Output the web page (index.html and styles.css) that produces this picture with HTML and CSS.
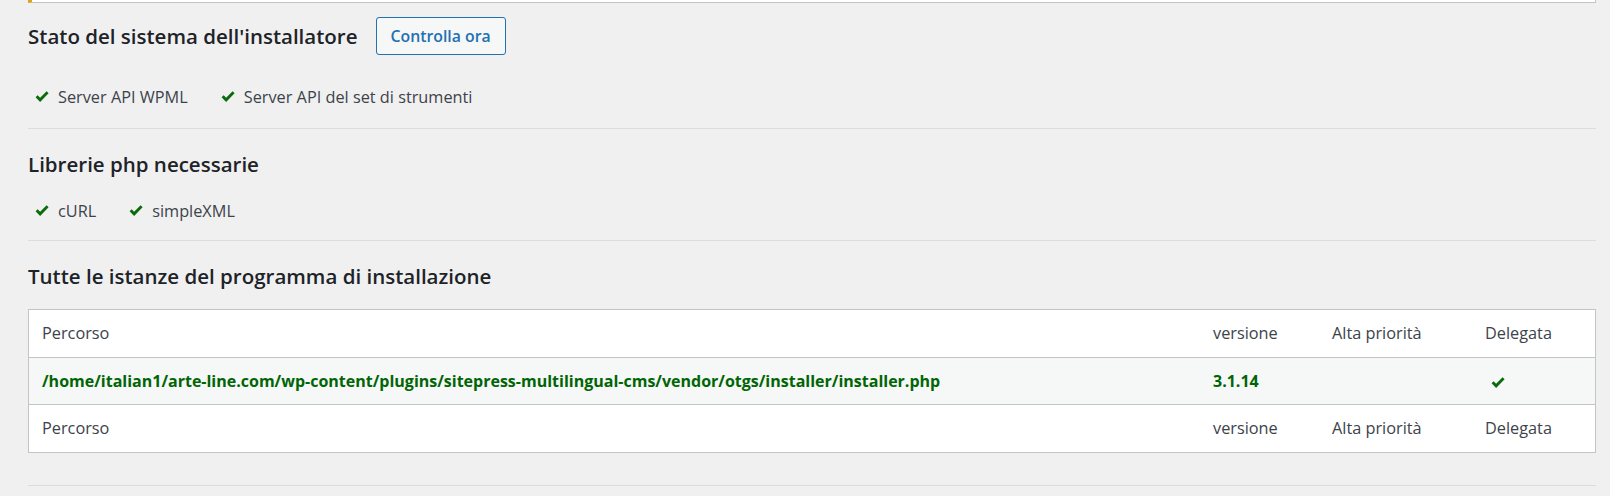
FILE: index.html
```html
<!DOCTYPE html>
<html lang="it">
<head>
<meta charset="utf-8">
<title>Stato del sistema dell'installatore</title>
<link rel="stylesheet" href="styles.css">
</head>
<body>
<div class="wrap">
  <div class="notice"></div>

  <div class="status-head">
    <h2 class="title">Stato del sistema dell'installatore</h2>
    <button class="btn" type="button">Controlla ora</button>
  </div>
  <ul class="checks checks-first">
    <li><svg class="ok" viewBox="0 0 14 12" width="14" height="12"><path d="M0.6 6.2 L2.6 4.3 L5.1 6.8 L11.6 0.3 L13.6 2.3 L5.1 10.9 Z"/></svg>Server API WPML</li>
    <li><svg class="ok" viewBox="0 0 14 12" width="14" height="12"><path d="M0.6 6.2 L2.6 4.3 L5.1 6.8 L11.6 0.3 L13.6 2.3 L5.1 10.9 Z"/></svg>Server API del set di strumenti</li>
  </ul>
  <hr class="sep sep-1">

  <h2 class="title title-2">Librerie php necessarie</h2>
  <ul class="checks checks-second">
    <li><svg class="ok" viewBox="0 0 14 12" width="14" height="12"><path d="M0.6 6.2 L2.6 4.3 L5.1 6.8 L11.6 0.3 L13.6 2.3 L5.1 10.9 Z"/></svg>cURL</li>
    <li><svg class="ok" viewBox="0 0 14 12" width="14" height="12"><path d="M0.6 6.2 L2.6 4.3 L5.1 6.8 L11.6 0.3 L13.6 2.3 L5.1 10.9 Z"/></svg>simpleXML</li>
  </ul>
  <hr class="sep sep-2">

  <h2 class="title title-3">Tutte le istanze del programma di installazione</h2>
  <table class="instances">
    <colgroup>
      <col class="c-path">
      <col class="c-ver">
      <col class="c-prio">
      <col class="c-del">
    </colgroup>
    <thead>
      <tr><th>Percorso</th><th>versione</th><th>Alta priorità</th><th>Delegata</th></tr>
    </thead>
    <tbody>
      <tr>
        <td class="green">/home/italian1/arte-line.com/wp-content/plugins/sitepress-multilingual-cms/vendor/otgs/installer/installer.php</td>
        <td class="green">3.1.14</td>
        <td></td>
        <td class="del-cell"><svg class="ok ok-small" viewBox="0 0 14 12" width="14" height="12"><path d="M0.6 6.2 L2.6 4.3 L5.1 6.8 L11.6 0.3 L13.6 2.3 L5.1 10.9 Z"/></svg></td>
      </tr>
    </tbody>
    <tfoot>
      <tr><th>Percorso</th><th>versione</th><th>Alta priorità</th><th>Delegata</th></tr>
    </tfoot>
  </table>
  <hr class="sep sep-3">
</div>
</body>
</html>
```

FILE: styles.css
```css
html, body {
  margin: 0;
  padding: 0;
  background: #f0f0f1;
}

body {
  font-family: "Open Sans", "Noto Sans", "Liberation Sans", sans-serif;
  font-size: 16.3px;
  color: #3c434a;
}

.wrap {
  padding: 0 14px 0 28px;
}

.notice {
  height: 2px;
  background: #fff;
  border: 1px solid #c3c4c7;
  border-top: 0;
  border-left: 4px solid #dba617;
}

.status-head {
  display: flex;
  align-items: center;
  margin-top: 14px;
  height: 38px;
}

.title {
  margin: 0;
  font-size: 20.5px;
  font-weight: 600;
  line-height: 30px;
  color: #1d2327;
}

.btn {
  margin-left: 18px;
  height: 38px;
  padding: 0 14px;
  font-family: inherit;
  font-size: 15.8px;
  font-weight: 600;
  color: #2271b1;
  background: #f6f7f7;
  border: 1px solid #2271b1;
  border-radius: 3px;
}

.checks {
  display: flex;
  gap: 26px;
  list-style: none;
  margin: 0;
  padding: 0;
  line-height: 24px;
}

.checks li {
  display: flex;
  align-items: center;
  gap: 9px;
  padding-left: 7px;
}

.checks-first {
  margin-top: 30px;
}

.checks-second {
  margin-top: 20px;
}

.ok {
  fill: #0a6b0a;
  flex: none;
}

.sep {
  margin: 0;
  border: 0;
  border-top: 1px solid #dcdcde;
  height: 0;
}

.sep-1 {
  margin-top: 19px;
}

.sep-2 {
  margin-top: 17px;
}

.sep-3 {
  margin-top: 32px;
}

.title-2 {
  margin-top: 20px;
}

.title-3 {
  margin-top: 20px;
}

.instances {
  margin-top: 18px;
  width: 100%;
  table-layout: fixed;
  border-collapse: separate;
  border-spacing: 0;
  background: #fff;
  border: 1px solid #c3c4c7;
}

.c-ver { width: 119px; }
.c-prio { width: 153px; }
.c-del { width: 123px; }

.instances th,
.instances td {
  text-align: left;
  font-weight: 400;
  line-height: 24px;
  padding: 11px 13px 12px;
  color: #3c434a;
}

.instances thead th {
  border-bottom: 1px solid #c3c4c7;
}

.instances tfoot th {
  border-top: 1px solid #c3c4c7;
}

.instances tbody td {
  background: #f6f7f7;
  padding: 11px 13px;
}

.instances td.green {
  color: #006505;
  font-size: 16px;
  font-weight: 700;
  white-space: nowrap;
}

.del-cell .ok-small {
  margin-left: 6px;
  vertical-align: middle;
}
```
